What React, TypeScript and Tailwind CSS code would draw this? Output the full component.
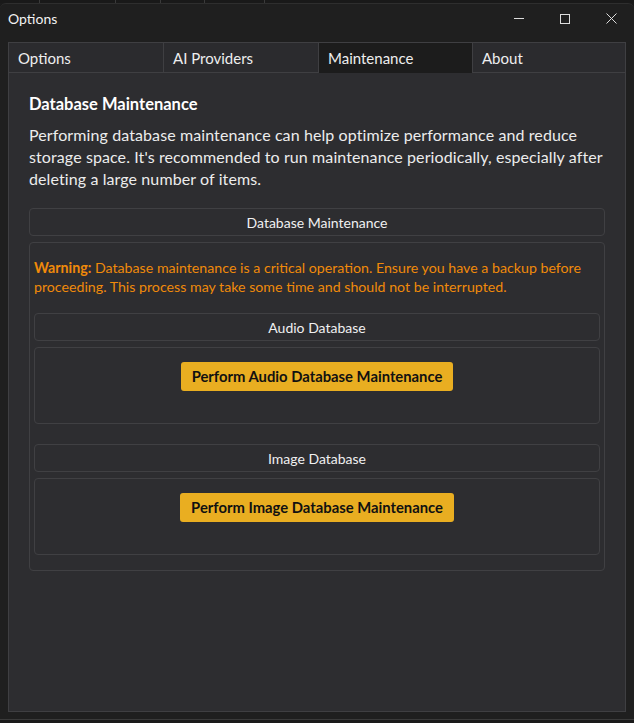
import React from "react";

const font = { fontFamily: 'Lato, "Noto Sans", sans-serif' };

function Header({ children }: { children: React.ReactNode }) {
  return (
    <div className="h-[28px] flex items-center justify-center rounded-[4px] border border-[#404043] text-[14px] text-[#f0f0f0]">
      {children}
    </div>
  );
}

function Section({ title, button }: { title: string; button: string }) {
  return (
    <div className="flex flex-col gap-[6px]">
      <Header>{title}</Header>
      <div className="h-[77px] rounded-[4px] border border-[#404043] flex justify-center pt-[14px]">
        <button className="h-[29px] px-[11px] rounded-[3px] bg-[#e9ae21] text-[#111] text-[14.8px] font-bold leading-none">
          {button}
        </button>
      </div>
    </div>
  );
}

export default function App() {
  return (
    <div className="w-[634px] h-[723px] bg-[#1b1b1b] flex flex-col overflow-hidden" style={font}>
      <div className="h-[3px] bg-[#191919] flex shrink-0">
        <div className="w-[40px] border-r border-[#3a3a3a]" />
        <div className="w-[76px] border-r border-[#3a3a3a]" />
        <div className="w-[45px] border-r border-[#3a3a3a]" />
        <div className="w-[44px] border-r border-[#3a3a3a]" />
        <div className="w-[60px] border-r border-[#3a3a3a]" />
      </div>
      <div className="flex-1 bg-[#1f1f1f] border-t border-[#2e2e2e] rounded-t-[6px] flex flex-col">
        <div className="h-[29px] flex items-center pl-[8px] shrink-0">
          <span className="text-[14px] text-[#f2f2f2]">Options</span>
          <div className="ml-auto flex items-center h-full">
            <div className="w-[46px] h-full flex items-center justify-center">
              <div className="w-[10px] h-px bg-[#dcdcdc]" />
            </div>
            <div className="w-[46px] h-full flex items-center justify-center">
              <div className="w-[10px] h-[10px] border border-[#dcdcdc]" />
            </div>
            <div className="w-[46px] h-full flex items-center justify-center">
              <svg width="11" height="11" viewBox="0 0 11 11">
                <path d="M0.5 0.5 L10.5 10.5 M10.5 0.5 L0.5 10.5" stroke="#dcdcdc" strokeWidth="1" />
              </svg>
            </div>
          </div>
        </div>
        <div className="mx-[8px] mt-[9px] border border-[#3f3f42] flex flex-col h-[670px] bg-[#2d2d30]">
          <div className="flex h-[30px] shrink-0">
            <div className="w-[155px] border-r border-b border-[#3f3f42] bg-[#2b2b2e] flex items-center pt-[2px] pl-[9px] text-[15px] text-[#eeeeee]">Options</div>
            <div className="w-[155px] border-r border-b border-[#3f3f42] bg-[#2b2b2e] flex items-center pt-[2px] pl-[9px] text-[15px] text-[#eeeeee]">AI Providers</div>
            <div className="w-[154px] border-r border-[#3f3f42] bg-[#1c1c1c] flex items-center pt-[1px] pl-[9px] text-[15px] text-[#eeeeee]">Maintenance</div>
            <div className="flex-1 border-b border-[#3f3f42] bg-[#2b2b2e] flex items-center pt-[2px] pl-[9px] text-[15px] text-[#eeeeee]">About</div>
          </div>
          <div className="px-[20px] pt-[21px]">
            <h1 className="text-[16.5px] font-bold text-white leading-[20px]">Database Maintenance</h1>
            <p className="mt-[10px] text-[16px] tracking-[0.1px] leading-[22px] text-[#ececec]">
              Performing database maintenance can help optimize performance and reduce storage space. It's recommended to run maintenance periodically, especially after deleting a large number of items.
            </p>
            <div className="mt-[18px] flex flex-col gap-[6px]">
              <Header>Database Maintenance</Header>
              <div className="rounded-[4px] border border-[#404043] px-[4px] pt-[15px] h-[329px]">
                <p className="text-[14.2px] leading-[19px] text-[#f08a0a]">
                  <span className="font-bold">Warning:</span> Database maintenance is a critical operation. Ensure you have a backup before proceeding. This process may take some time and should not be interrupted.
                </p>
                <div className="mt-[17px] flex flex-col gap-[20px]">
                  <Section title="Audio Database" button="Perform Audio Database Maintenance" />
                  <Section title="Image Database" button="Perform Image Database Maintenance" />
                </div>
              </div>
            </div>
          </div>
        </div>
        <div className="flex-1" />
      </div>
      <div className="h-[4px] bg-[#1a1a1a] border-t border-[#3a3a3a] shrink-0" />
    </div>
  );
}
